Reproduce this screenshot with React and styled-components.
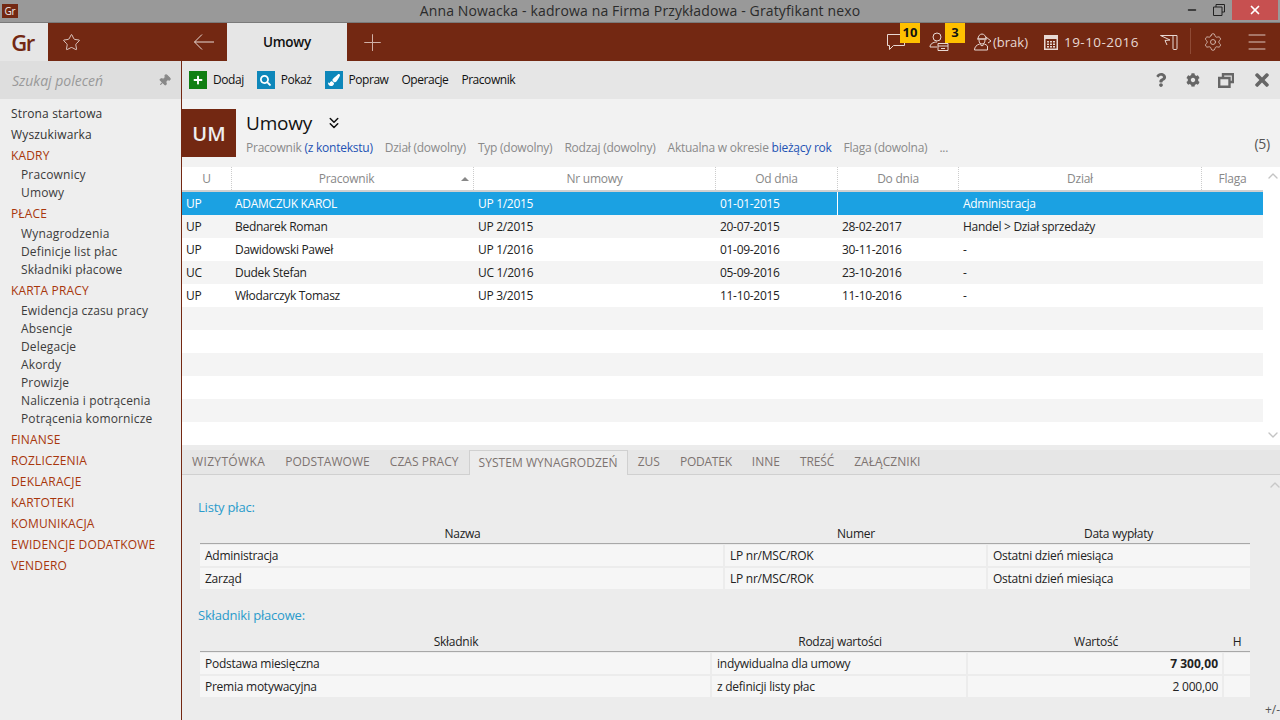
import React from 'react'
import styled, { createGlobalStyle } from 'styled-components'
import { Star, Plus, Settings, Menu, Pin, ChevronsDown, ChevronUp, ChevronDown, Minus, X } from 'lucide-react'
import { FaCog, FaQuestion, FaTimes, FaPlus, FaSearch, FaPaintBrush } from 'react-icons/fa'

const BROWN = '#732812'

const GlobalStyle = createGlobalStyle`
  html, body { margin: 0; padding: 0; background: #ececec; }
  body { font-family: "Open Sans", "Liberation Sans", sans-serif; font-size: 12px; letter-spacing: -0.25px; color: #222; }
  * { box-sizing: border-box; }
`

const Page = styled.div`
  width: 1280px;
  height: 720px;
  overflow: hidden;
  display: flex;
  flex-direction: column;
`

const TitleBar = styled.div`
  height: 23px;
  flex: none;
  background: #999;
  border-bottom: 1px solid #7a7a7a;
  display: flex;
  align-items: flex-start;
  justify-content: space-between;
  position: relative;
`

const AppBadge = styled.div`
  width: 16px;
  height: 14px;
  margin: 4px 0 0 2px;
  background: ${BROWN};
  color: #eee;
  font-size: 10px;
  line-height: 14px;
  text-align: center;
`

const WindowTitle = styled.div`
  position: absolute;
  left: 0;
  right: 0;
  top: 0;
  text-align: center;
  font-size: 14px;
  line-height: 22px;
  letter-spacing: 0.14px;
  color: #2b2b2b;
`

const WindowButtons = styled.div`
  display: flex;
  align-items: flex-start;
  position: relative;
`

const WinBtn = styled.div`
  width: ${p => p.$w}px;
  height: 20px;
  display: flex;
  align-items: center;
  justify-content: center;
  background: ${p => p.$close ? '#c75050' : 'transparent'};
  color: ${p => p.$close ? '#fff' : '#222'};
`

const TopBar = styled.div`
  height: 38px;
  flex: none;
  background: ${BROWN};
  display: flex;
  align-items: stretch;
  color: #e8d8d3;
`

const Logo = styled.div`
  width: 48px;
  padding-right: 3px;
  background: #e6e6e6;
  color: ${BROWN};
  font-size: 22px;
  font-weight: 600;
  letter-spacing: -1.5px;
  display: flex;
  align-items: center;
  justify-content: center;
`

const TopIcon = styled.div`
  width: ${p => p.$w}px;
  display: flex;
  align-items: center;
  justify-content: center;
  flex: none;
  color: ${p => p.$color || 'inherit'};
`

const ActiveTab = styled.div`
  width: 120px;
  flex: none;
  background: #e6e6e6;
  color: #111;
  font-size: 13.5px;
  font-weight: 600;
  display: flex;
  align-items: center;
  justify-content: center;
`

const Spacer = styled.div`
  flex: ${p => p.$w ? 'none' : 1};
  width: ${p => p.$w ? `${p.$w}px` : 'auto'};
`

const Notify = styled.div`
  position: relative;
  width: ${p => p.$w}px;
  display: flex;
  align-items: center;
  flex: none;
`

const Badge = styled.span`
  position: absolute;
  top: 0;
  left: ${p => p.$left}px;
  width: 20px;
  height: 20px;
  background: #ffc000;
  color: #111;
  font-size: 13px;
  font-weight: 700;
  letter-spacing: 0;
  line-height: 19px;
  text-align: center;
`

const TopText = styled.span`
  font-size: ${p => p.$size || 13}px;
  letter-spacing: ${p => p.$spacing || 0}px;
  white-space: nowrap;
`

const TopGroup = styled.div`
  display: flex;
  align-items: center;
  gap: ${p => p.$gap}px;
  width: ${p => p.$w}px;
  flex: none;
`

const Divider = styled.div`
  width: 1px;
  margin: 5px 0 7px;
  background: #8f4a35;
  flex: none;
`

const Body = styled.div`
  flex: 1;
  min-height: 0;
  display: flex;
`

const Sidebar = styled.nav`
  width: 182px;
  flex: none;
  background: #eee;
  border-right: 1px solid ${BROWN};
  letter-spacing: 0.15px;
`

const SearchBox = styled.div`
  height: 38px;
  background: #dedede;
  display: flex;
  align-items: center;
  justify-content: space-between;
  padding: 0 10px 0 12px;
  color: #999;
  font-size: 14px;
  font-style: italic;
  letter-spacing: 0;
`

const PinIcon = styled(Pin)`
  transform: rotate(45deg);
`

const NavList = styled.div`
  padding-top: 4px;
`

const NavItem = styled.div`
  height: 21px;
  line-height: 21px;
  padding-left: 11px;
  white-space: nowrap;
  color: ${p => p.$section ? '#a8360c' : '#333'};
`

const SubItem = styled.div`
  height: 18px;
  line-height: 18px;
  padding-left: 21px;
  white-space: nowrap;
  color: #3c3c3c;
`

const SubList = styled.div`
  padding: ${p => p.$top}px 0 1px;
`

const Main = styled.main`
  flex: 1;
  min-width: 0;
  display: flex;
  flex-direction: column;
`

const Toolbar = styled.div`
  height: 38px;
  flex: none;
  background: #e6e6e6;
  display: flex;
  align-items: center;
  padding: 0 8px 0 7px;
  color: #111;
  letter-spacing: -0.45px;
`

const ToolBtn = styled.div`
  display: flex;
  align-items: center;
  gap: 6px;
  margin-right: 13px;
  white-space: nowrap;
`

const ToolLabel = styled.span`
  margin-top: -2px;
`

const ToolIcon = styled.span`
  width: 18px;
  height: 18px;
  background: ${p => p.$bg};
  color: #fff;
  display: flex;
  align-items: center;
  justify-content: center;
`

const RightIcons = styled.div`
  margin-left: auto;
  display: flex;
  align-items: center;
  gap: 18px;
  color: #666;
`

const Header = styled.header`
  height: 68px;
  flex: none;
  background: #f2f2f2;
  display: flex;
  padding-top: 10px;
  position: relative;
`

const HeaderBox = styled.div`
  width: 54px;
  height: 48px;
  background: ${BROWN};
  color: #eee;
  font-size: 20px;
  font-weight: 600;
  letter-spacing: 0;
  display: flex;
  align-items: center;
  justify-content: center;
`

const HeaderText = styled.div`
  margin-left: 10px;
`

const HeaderTitle = styled.div`
  display: flex;
  align-items: center;
  gap: 13px;
  height: 28px;
  font-size: 19px;
  letter-spacing: -0.2px;
  color: #111;
`

const Filters = styled.div`
  display: flex;
  gap: 12px;
  margin-top: 2px;
  color: #8a8a8a;
  letter-spacing: -0.24px;
  white-space: nowrap;
  b {
    font-weight: 400;
    color: #2453b4;
  }
`

const Count = styled.span`
  position: absolute;
  right: 10px;
  top: 35px;
  font-size: 14px;
  color: #555;
`

const GridArea = styled.section`
  height: 278px;
  flex: none;
  display: flex;
  background: #fff;
`

const GridBody = styled.div`
  width: 1081px;
  flex: none;
`

const Scroll = styled.div`
  flex: 1;
  display: flex;
  flex-direction: column;
  justify-content: space-between;
  align-items: center;
  color: #c4c4c4;
  padding: 1px 0 2px 2px;
`

const columns = '49px 242px 242px 122px 121px 243px 62px'

const GridHead = styled.div`
  height: 25px;
  display: grid;
  grid-template-columns: ${columns};
  border-bottom: 2px solid #d0d0d0;
  color: #888;
`

const HeadCell = styled.div`
  position: relative;
  text-align: center;
  line-height: 23px;
  padding-right: ${p => p.$sorted ? 12 : 0}px;
  border-left: ${p => p.$first ? 'none' : '1px dotted #ccc'};
`

const SortMark = styled.span`
  position: absolute;
  right: 4px;
  top: 10px;
  width: 0;
  height: 0;
  border-left: 4px solid transparent;
  border-right: 4px solid transparent;
  border-bottom: 4px solid #888;
`

const GridRow = styled.div`
  height: 23px;
  display: grid;
  grid-template-columns: ${columns};
  letter-spacing: -0.3px;
  background: ${p => p.$selected ? '#1ba1e2' : p.$odd ? '#f4f4f4' : '#fff'};
  color: ${p => p.$selected ? '#fff' : '#222'};
`

const GridCell = styled.div`
  line-height: 23px;
  padding-left: ${p => p.$pad}px;
  white-space: nowrap;
  overflow: hidden;
  border-left: ${p => p.$mark ? '1px solid #fff' : 'none'};
`

const Gap = styled.div`
  height: 5px;
  flex: none;
  background: #ececec;
`

const Tabs = styled.div`
  height: 25px;
  flex: none;
  display: flex;
  background: #e6e6e6;
  border-bottom: 1px solid #d0d0d0;
`

const Tab = styled.div`
  padding: 0 ${p => p.$active ? 9 : 10}px;
  line-height: 23px;
  letter-spacing: ${p => p.$spacing}px;
  color: #7d7370;
  height: ${p => p.$active ? '25px' : '24px'};
  background: ${p => p.$active ? '#ececec' : 'transparent'};
  border: ${p => p.$active ? '1px solid #d0d0d0' : 'none'};
  border-bottom: none;
  white-space: nowrap;
`

const Detail = styled.section`
  flex: 1;
  min-height: 0;
  background: #ececec;
  display: flex;
`

const DetailBody = styled.div`
  width: 1081px;
  flex: none;
  padding: 24px 0 0 16px;
`

const SectionLabel = styled.div`
  height: 17px;
  line-height: 17px;
  font-size: 13px;
  letter-spacing: -0.2px;
  color: #2a9bcb;
  margin-bottom: ${p => p.$after}px;
`

const SubTable = styled.div`
  margin: 0 0 ${p => p.$after}px 2px;
  width: 1050px;
`

const SubHead = styled.div`
  display: grid;
  grid-template-columns: ${p => p.$cols};
  height: 19px;
  line-height: 18px;
  text-align: center;
  color: #222;
  border-bottom: 1px solid #a8a8a8;
  margin-bottom: 1px;
`

const SubRow = styled.div`
  display: grid;
  grid-template-columns: ${p => p.$cols};
  gap: 2px;
  height: 23px;
  padding-bottom: 2px;
`

const SubCell = styled.div`
  background: #f6f6f6;
  padding: 0 ${p => p.$right ? 4 : 5}px;
  line-height: 21px;
  white-space: nowrap;
  text-align: ${p => p.$right ? 'right' : 'left'};
  font-weight: ${p => p.$bold ? 700 : 400};
  letter-spacing: ${p => p.$bold ? 0 : -0.25}px;
  color: #222;
`

const DetailSide = styled.div`
  flex: 1;
  display: flex;
  flex-direction: column;
  align-items: center;
  justify-content: space-between;
  color: #c8c8c8;
  padding: 2px 0 2px 2px;
`

const PlusMinus = styled.span`
  font-size: 12px;
  letter-spacing: 0;
  color: #555;
  margin-right: 4px;
`

const nav = [
  { label: 'Strona startowa' },
  { label: 'Wyszukiwarka' },
  { label: 'KADRY', section: true, top: 0, subs: ['Pracownicy', 'Umowy'] },
  { label: 'PŁACE', section: true, top: 1, subs: ['Wynagrodzenia', 'Definicje list płac', 'Składniki płacowe'] },
  { label: 'KARTA PRACY', section: true, top: 1, subs: ['Ewidencja czasu pracy', 'Absencje', 'Delegacje', 'Akordy', 'Prowizje', 'Naliczenia i potrącenia', 'Potrącenia komornicze'] },
  { label: 'FINANSE', section: true },
  { label: 'ROZLICZENIA', section: true },
  { label: 'DEKLARACJE', section: true },
  { label: 'KARTOTEKI', section: true },
  { label: 'KOMUNIKACJA', section: true },
  { label: 'EWIDENCJE DODATKOWE', section: true },
  { label: 'VENDERO', section: true },
]

const rows = [
  ['UP', 'ADAMCZUK KAROL', 'UP 1/2015', '01-01-2015', '', 'Administracja', ''],
  ['UP', 'Bednarek Roman', 'UP 2/2015', '20-07-2015', '28-02-2017', 'Handel > Dział sprzedaży', ''],
  ['UP', 'Dawidowski Paweł', 'UP 1/2016', '01-09-2016', '30-11-2016', '-', ''],
  ['UC', 'Dudek Stefan', 'UC 1/2016', '05-09-2016', '23-10-2016', '-', ''],
  ['UP', 'Włodarczyk Tomasz', 'UP 3/2015', '11-10-2015', '11-10-2016', '-', ''],
  [], [], [], [], [],
]

const heads = ['U', 'Pracownik', 'Nr umowy', 'Od dnia', 'Do dnia', 'Dział', 'Flaga']

const tabs = [
  { label: 'WIZYTÓWKA', spacing: 0.35 },
  { label: 'PODSTAWOWE', spacing: 0.05 },
  { label: 'CZAS PRACY', spacing: 0.05 },
  { label: 'SYSTEM WYNAGRODZEŃ', spacing: 0.05, active: true },
  { label: 'ZUS', spacing: 0.05 },
  { label: 'PODATEK', spacing: -0.25 },
  { label: 'INNE', spacing: 0.05 },
  { label: 'TREŚĆ', spacing: -0.15 },
  { label: 'ZAŁĄCZNIKI', spacing: 0.05 },
]

const listCols = '525px 262px 263px'
const compCols = '512px 256px 256px 26px'
const listRowCols = '523px 261px 1fr'
const compRowCols = '510px 254px 254px 1fr'

function BackArrow() {
  return (
    <svg width="22" height="18" viewBox="0 0 22 18" fill="none" stroke="currentColor" strokeWidth="1">
      <path d="M21 9H1.500M9 1.500L1.500 9 9 16.500" />
    </svg>
  )
}

function BubbleIcon() {
  return (
    <svg width="20" height="20" viewBox="0 0 20 20" fill="none" stroke="currentColor" strokeWidth="1">
      <path d="M1.500 2.500h17v11h-11l-4 4v-4h-2z" />
    </svg>
  )
}

function PersonCardIcon() {
  return (
    <svg width="22" height="22" viewBox="0 0 22 22" fill="none" stroke="currentColor" strokeWidth="1">
      <circle cx="8" cy="6" r="4" />
      <path d="M1 16c0-3 3-5 7-5M1 16h7" />
      <path d="M9 12.500h10v7h-10zM9 15h10M12 17.500h4" />
    </svg>
  )
}

function WorkerIcon() {
  return (
    <svg width="20" height="20" viewBox="0 0 20 20" fill="none" stroke="currentColor" strokeWidth="1">
      <path d="M5 7c0-3 2-5 4-5s4 2 4 5zM4 7h10" />
      <path d="M6 8c0 3 1.500 4 3 4s3-1 3-4" />
      <path d="M1.500 18c0-3 2-5 5-6l2.500 2 2.500-2c1 .3 2 1 3 2v4z" />
      <path d="M13 5l5 4-3 2" />
    </svg>
  )
}

function CalendarIcon() {
  return (
    <svg width="14" height="15" viewBox="0 0 14 15">
      <path d="M0 0h14v15H0z" fill="currentColor" />
      <path d="M1.500 4h11v9.500h-11z" fill={BROWN} />
      <path d="M3 6h2v1.500H3zM6 6h2v1.500H6zM9 6h2v1.500H9zM3 8.500h2V10H3zM6 8.500h2V10H6zM9 8.500h2V10H9zM3 11h2v1.500H3zM6 11h2v1.500H6zM9 11h2v1.500H9z" fill="currentColor" />
    </svg>
  )
}

function FlagDoorIcon() {
  return (
    <svg width="18" height="16" viewBox="0 0 18 16" fill="none" stroke="currentColor" strokeWidth="1">
      <path d="M.5 1.500h16.500v13a1 1 0 0 1-1 1h-2a1 1 0 0 1-1-1V2" />
      <path d="M.5 1.500L10 6 5 6.500 7 11" />
    </svg>
  )
}

function RestoreIcon() {
  return (
    <svg width="12" height="12" viewBox="0 0 12 12" fill="none" stroke="currentColor" strokeWidth="1">
      <path d="M3 3V.5h8.500V8H9" />
      <path d="M.5 3h8.500v8.500H.5z" />
    </svg>
  )
}

function PanelsIcon() {
  return (
    <svg width="16" height="15" viewBox="0 0 16 15" fill="none" stroke="currentColor" strokeWidth="2.4">
      <path d="M5 4V1.200h10V9h-3" />
      <path d="M1.200 5h10.300v8.800H1.200z" />
    </svg>
  )
}

export default function App() {
  return (
    <Page>
      <GlobalStyle />
      <TitleBar>
        <AppBadge>Gr</AppBadge>
        <WindowTitle>Anna Nowacka - kadrowa na Firma Przykładowa - Gratyfikant nexo</WindowTitle>
        <WindowButtons>
          <WinBtn $w={26}><Minus size={12} strokeWidth={3} /></WinBtn>
          <WinBtn $w={27}><RestoreIcon /></WinBtn>
          <WinBtn $w={46} $close><X size={14} strokeWidth={3} /></WinBtn>
          <WinBtn $w={2} />
        </WindowButtons>
      </TitleBar>

      <TopBar>
        <Logo>Gr</Logo>
        <TopIcon $w={47} $color="#f5ece9"><Star size={19} strokeWidth={1} /></TopIcon>
        <Spacer $w={86} />
        <TopIcon $w={46}><BackArrow /></TopIcon>
        <ActiveTab>Umowy</ActiveTab>
        <TopIcon $w={50} $color="#d0b0a6"><Plus size={27} strokeWidth={0.9} /></TopIcon>
        <Spacer />
        <Notify $w={43}>
          <BubbleIcon />
          <Badge $left={14}>10</Badge>
        </Notify>
        <Notify $w={44}>
          <PersonCardIcon />
          <Badge $left={16}>3</Badge>
        </Notify>
        <TopGroup $gap={0} $w={71}>
          <WorkerIcon />
          <TopText>(brak)</TopText>
        </TopGroup>
        <TopGroup $gap={6} $w={116}>
          <CalendarIcon />
          <TopText $size={13.5} $spacing={0.45}>19-10-2016</TopText>
        </TopGroup>
        <TopIcon $w={18}><FlagDoorIcon /></TopIcon>
        <Spacer $w={12} />
        <Divider />
        <TopIcon $w={43} $color="#dcc4bc"><Settings size={20} strokeWidth={1} /></TopIcon>
        <TopIcon $w={46} $color="#dcc4bc"><Menu size={24} strokeWidth={1} /></TopIcon>
      </TopBar>

      <Body>
        <Sidebar>
          <SearchBox>
            <span>Szukaj poleceń</span>
            <PinIcon size={13} fill="#888" color="#888" />
          </SearchBox>
          <NavList>
            {nav.map(item => (
              <div key={item.label}>
                <NavItem $section={item.section}>{item.label}</NavItem>
                {item.subs && (
                  <SubList $top={item.top}>
                    {item.subs.map(s => <SubItem key={s}>{s}</SubItem>)}
                  </SubList>
                )}
              </div>
            ))}
          </NavList>
        </Sidebar>

        <Main>
          <Toolbar>
            <ToolBtn><ToolIcon $bg="#0f7f12"><FaPlus size={10} /></ToolIcon><ToolLabel>Dodaj</ToolLabel></ToolBtn>
            <ToolBtn><ToolIcon $bg="#0e87ba"><FaSearch size={11} /></ToolIcon><ToolLabel>Pokaż</ToolLabel></ToolBtn>
            <ToolBtn><ToolIcon $bg="#0e87ba"><FaPaintBrush size={12} /></ToolIcon><ToolLabel>Popraw</ToolLabel></ToolBtn>
            <ToolBtn><ToolLabel>Operacje</ToolLabel></ToolBtn>
            <ToolBtn><ToolLabel>Pracownik</ToolLabel></ToolBtn>
            <RightIcons>
              <FaQuestion size={14} />
              <FaCog size={14} />
              <PanelsIcon />
              <FaTimes size={20} />
            </RightIcons>
          </Toolbar>

          <Header>
            <HeaderBox>UM</HeaderBox>
            <HeaderText>
              <HeaderTitle>Umowy <ChevronsDown size={18} strokeWidth={2} /></HeaderTitle>
              <Filters>
                <span>Pracownik <b>(z kontekstu)</b></span>
                <span>Dział (dowolny)</span>
                <span>Typ (dowolny)</span>
                <span>Rodzaj (dowolny)</span>
                <span>Aktualna w okresie <b>bieżący rok</b></span>
                <span>Flaga (dowolna)</span>
                <span>...</span>
              </Filters>
            </HeaderText>
            <Count>(5)</Count>
          </Header>

          <GridArea>
            <GridBody>
              <GridHead>
                {heads.map((h, i) => (
                  <HeadCell key={h} $first={i === 0} $sorted={h === 'Pracownik'}>
                    {h}
                    {h === 'Pracownik' && <SortMark />}
                  </HeadCell>
                ))}
              </GridHead>
              {rows.map((r, i) => (
                <GridRow key={i} $selected={i === 0} $odd={i % 2 === 1}>
                  {heads.map((h, j) => (
                    <GridCell key={h} $mark={i === 0 && j === 4} $pad={j >= 2 ? 5 : 4}>{r[j]}</GridCell>
                  ))}
                </GridRow>
              ))}
            </GridBody>
            <Scroll>
              <ChevronUp size={16} strokeWidth={2} />
              <ChevronDown size={16} strokeWidth={2} />
            </Scroll>
          </GridArea>

          <Gap />
          <Tabs>
            {tabs.map(t => <Tab key={t.label} $active={t.active} $spacing={t.spacing}>{t.label}</Tab>)}
          </Tabs>

          <Detail>
            <DetailBody>
              <SectionLabel $after={9}>Listy płac:</SectionLabel>
              <SubTable $after={16}>
                <SubHead $cols={listCols}><span>Nazwa</span><span>Numer</span><span>Data wypłaty</span></SubHead>
                <SubRow $cols={listRowCols}><SubCell>Administracja</SubCell><SubCell>LP nr/MSC/ROK</SubCell><SubCell>Ostatni dzień miesiąca</SubCell></SubRow>
                <SubRow $cols={listRowCols}><SubCell>Zarząd</SubCell><SubCell>LP nr/MSC/ROK</SubCell><SubCell>Ostatni dzień miesiąca</SubCell></SubRow>
              </SubTable>
              <SectionLabel $after={9}>Składniki płacowe:</SectionLabel>
              <SubTable $after={0}>
                <SubHead $cols={compCols}><span>Składnik</span><span>Rodzaj wartości</span><span>Wartość</span><span>H</span></SubHead>
                <SubRow $cols={compRowCols}><SubCell>Podstawa miesięczna</SubCell><SubCell>indywidualna dla umowy</SubCell><SubCell $right $bold>7 300,00</SubCell><SubCell /></SubRow>
                <SubRow $cols={compRowCols}><SubCell>Premia motywacyjna</SubCell><SubCell>z definicji listy płac</SubCell><SubCell $right>2 000,00</SubCell><SubCell /></SubRow>
              </SubTable>
            </DetailBody>
            <DetailSide>
              <ChevronUp size={16} strokeWidth={2} />
              <PlusMinus>+/-</PlusMinus>
            </DetailSide>
          </Detail>
        </Main>
      </Body>
    </Page>
  )
}
